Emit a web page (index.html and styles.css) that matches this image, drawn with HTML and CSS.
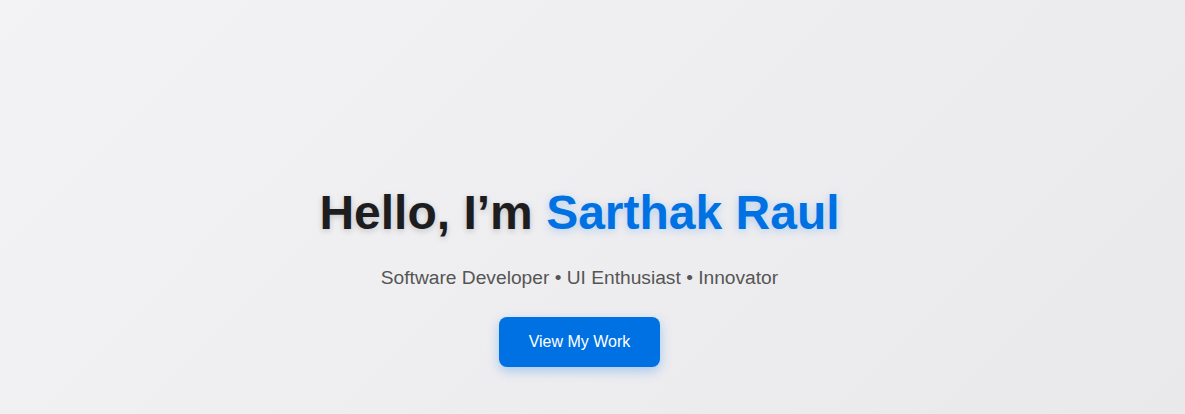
FILE: index.html
```html
<!DOCTYPE html>
<html lang="en">
<head>
<meta charset="utf-8">
<title>Sarthak Raul</title>
<link rel="stylesheet" href="styles.css">
</head>
<body>
<section class="hero">
  <h1 class="hero-title">Hello, I’m <span class="accent">Sarthak Raul</span></h1>
  <p class="hero-subtitle">Software Developer • UI Enthusiast • Innovator</p>
  <a class="btn" href="#work">View My Work</a>
</section>
</body>
</html>
```

FILE: styles.css
```css
html, body {
  margin: 0;
  padding: 0;
  height: 100%;
}
body {
  font-family: "Liberation Sans", Arial, sans-serif;
  background: linear-gradient(135deg, #f3f3f5 0%, #e9e9ec 100%);
  color: #1d1d1f;
}
.hero {
  display: flex;
  flex-direction: column;
  align-items: center;
  text-align: center;
  padding: 185px 26px 0 0;
}
.hero-title {
  margin: 0;
  font-size: 48px;
  font-weight: 700;
  line-height: normal;
  color: #1d1d1f;
  text-shadow: 0 2px 6px rgba(0, 0, 0, 0.18);
}
.accent {
  color: #0071e3;
  text-shadow: 0 2px 8px rgba(0, 113, 227, 0.25);
}
.hero-subtitle {
  margin: 27px 0 0;
  font-size: 19.2px;
  line-height: normal;
  color: #555;
}
.btn {
  margin-top: 28px;
  display: inline-block;
  width: 161px;
  box-sizing: border-box;
  padding: 15px 0;
  background: #0071e3;
  color: #fff;
  text-decoration: none;
  font-size: 16px;
  line-height: 20px;
  border-radius: 8px;
  box-shadow: 0 4px 12px rgba(0, 113, 227, 0.3);
}
```
